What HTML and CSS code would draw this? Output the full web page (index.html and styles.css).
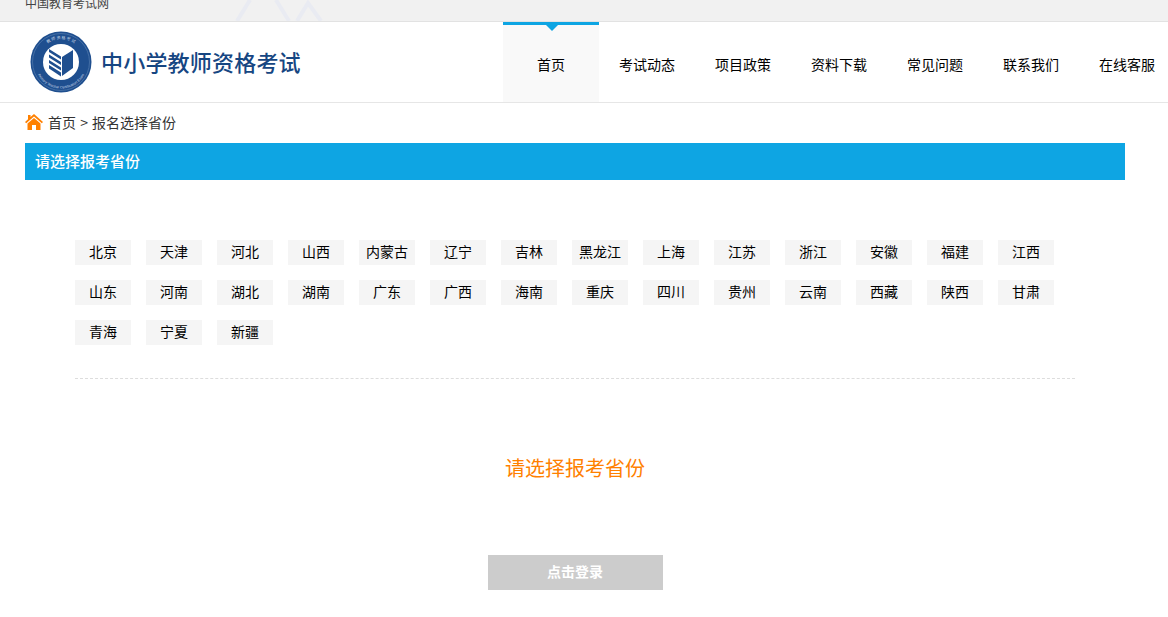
FILE: index.html
```html
<!DOCTYPE html>
<html lang="zh-CN">
<head>
<meta charset="utf-8">
<title>中小学教师资格考试</title>
<link rel="stylesheet" href="styles.css">
</head>
<body>
<div class="topbar">
  <span class="topbar-text">中国教育考试网</span>
  <svg class="topbar-art" width="125" height="21" viewBox="0 0 125 21" aria-hidden="true">
    <path d="M37 21 L50 0 M76 0 L89 21 M97 21 L108 3 L121 21" fill="none" stroke="#e9ebf2" stroke-width="4"/>
  </svg>
</div>
<header class="header">
  <a class="brand">
    <svg class="logo" width="64" height="64" viewBox="0 0 64 64" aria-hidden="true">
      <defs><path id="ring-low" d="M5.5 32 A26.5 26.5 0 0 0 58.5 32"/><path id="ring-high" d="M9 32 A23 23 0 0 1 55 32"/></defs>
      <circle cx="32" cy="32" r="30.5" fill="#1f4f8f"/>
      <circle cx="32" cy="32" r="28.5" fill="none" stroke="#5d83b3" stroke-width=".6"/>
      <circle cx="32" cy="32" r="18" fill="#fff"/>
      <text class="logo-ring-text"><textPath href="#ring-low" startOffset="50%" text-anchor="middle">Primary Teacher Certification Exam</textPath></text>
      <text class="logo-ring-cn"><textPath href="#ring-high" startOffset="50%" text-anchor="middle">教 师 资 格 考 试</textPath></text>
      <path d="M33 27 L44 20 V38 L33 46 Z" fill="#1f4f8f"/>
      <path d="M20 19 L32 26.5 V29.5 L20 22 Z M20 24.5 L32 32 V35 L20 27.5 Z M20 30 L32 37.5 V40.5 L20 33 Z M20 35 L32 42.5 V46.5 L20 38.5 Z" fill="#1f4f8f"/>
    </svg>
    <span class="brand-name">中小学教师资格考试</span>
  </a>
  <nav class="nav">
    <a class="nav-item is-active">首页</a>
    <a class="nav-item">考试动态</a>
    <a class="nav-item">项目政策</a>
    <a class="nav-item">资料下载</a>
    <a class="nav-item">常见问题</a>
    <a class="nav-item">联系我们</a>
    <a class="nav-item">在线客服</a>
  </nav>
</header>
<main class="main">
  <div class="crumbs">
    <svg class="home-icon" width="18" height="16" viewBox="0 0 18 16" aria-hidden="true">
      <path d="M9 0 L18 8 L16.8 9.2 L9 2.4 L1.2 9.2 L0 8 L3 5.3 V1 H5.5 V3.1 Z" fill="#ff8000"/>
      <path d="M9 4 L15.5 9.6 V16 H11 V11 H7 V16 H2.5 V9.6 Z" fill="#ff8000"/>
    </svg>
    <span class="crumb-text">首页 <span class="crumb-sep">&gt;</span> 报名选择省份</span>
  </div>
  <h2 class="section-title">请选择报考省份</h2>
  <ul class="provinces">
    <li class="province">北京</li><li class="province">天津</li><li class="province">河北</li><li class="province">山西</li><li class="province">内蒙古</li><li class="province">辽宁</li><li class="province">吉林</li><li class="province">黑龙江</li><li class="province">上海</li><li class="province">江苏</li><li class="province">浙江</li><li class="province">安徽</li><li class="province">福建</li><li class="province">江西</li>
    <li class="province">山东</li><li class="province">河南</li><li class="province">湖北</li><li class="province">湖南</li><li class="province">广东</li><li class="province">广西</li><li class="province">海南</li><li class="province">重庆</li><li class="province">四川</li><li class="province">贵州</li><li class="province">云南</li><li class="province">西藏</li><li class="province">陕西</li><li class="province">甘肃</li>
    <li class="province">青海</li><li class="province">宁夏</li><li class="province">新疆</li>
  </ul>
  <p class="prompt">请选择报考省份</p>
  <button class="login" type="button">点击登录</button>
</main>
</body>
</html>
```
FILE: styles.css
```css
html, body {
  margin: 0;
  padding: 0;
  height: 617px;
  overflow: hidden;
  background: #fff;
  font-family: "Noto Sans CJK SC", "Liberation Sans", sans-serif;
  color: #333;
}
.topbar {
  position: relative;
  height: 21px;
  padding-left: 25px;
  background: #f1f1f1;
  border-bottom: 1px solid #e2e2e2;
  overflow: hidden;
}
.topbar-text {
  display: block;
  font-size: 12px;
  line-height: 6px;
  color: #444;
}
.topbar-art {
  position: absolute;
  left: 200px;
  top: 0;
}
.header {
  display: flex;
  height: 80px;
  border-bottom: 1px solid #e6e6e6;
}
.brand {
  display: flex;
  align-items: center;
  width: 503px;
  flex: none;
  padding-left: 29px;
  box-sizing: border-box;
}
.logo {
  flex: none;
}
.logo-ring-text {
  font-size: 3.6px;
  fill: #c9d6e6;
  font-family: "Liberation Sans", sans-serif;
}
.logo-ring-cn {
  font-size: 4px;
  fill: #c9d6e6;
}
.brand-name {
  margin: -2px 0 0 8px;
  font-size: 22px;
  line-height: 30px;
  letter-spacing: .2px;
  color: #164682;
  white-space: nowrap;
  font-weight: 500;
}
.nav {
  display: flex;
  flex: none;
}
.nav-item {
  position: relative;
  box-sizing: border-box;
  width: 96px;
  height: 80px;
  line-height: 78px;
  border-top: 3px solid transparent;
  text-align: center;
  font-size: 14px;
  color: #000;
}
.nav-item.is-active {
  background: #f9f9f9;
  border-top-color: #0ea5e3;
}
.nav-item.is-active::after {
  content: "";
  position: absolute;
  left: 43px;
  top: 0;
  border-style: solid;
  border-width: 6px 6px 0;
  border-color: #0ea5e3 transparent transparent;
}
.main {
  width: 1100px;
  margin-left: 25px;
}
.crumbs {
  display: flex;
  align-items: center;
  gap: 5px;
  height: 40px;
  font-size: 14px;
  color: #333;
}
.crumb-text {
  margin-top: -2px;
}
.crumb-sep {
  margin: 0 1px;
}
.home-icon {
  margin-top: -3px;
}
.section-title {
  margin: 0;
  height: 37px;
  padding-left: 10px;
  background: #0ea5e3;
  color: #fff;
  font-size: 15px;
  font-weight: 500;
  line-height: 35px;
}
.provinces {
  display: flex;
  flex-wrap: wrap;
  gap: 15px;
  margin: 60px 50px 0;
  padding: 0 0 33px;
  list-style: none;
  border-bottom: 1px dashed #ddd;
}
.province {
  width: 56px;
  height: 25px;
  background: #f5f5f5;
  text-align: center;
  font-size: 14px;
  line-height: 23px;
  color: #000;
  white-space: nowrap;
}
.prompt {
  margin: 74px 0 0;
  height: 30px;
  text-align: center;
  font-size: 20px;
  line-height: 30px;
  color: #ff8000;
}
.login {
  display: block;
  width: 175px;
  height: 35px;
  margin: 72px auto 0;
  padding: 0 0 3px;
  border: 0;
  background: #ccc;
  color: #fff;
  font-family: inherit;
  font-size: 14px;
  font-weight: 700;
}
```
